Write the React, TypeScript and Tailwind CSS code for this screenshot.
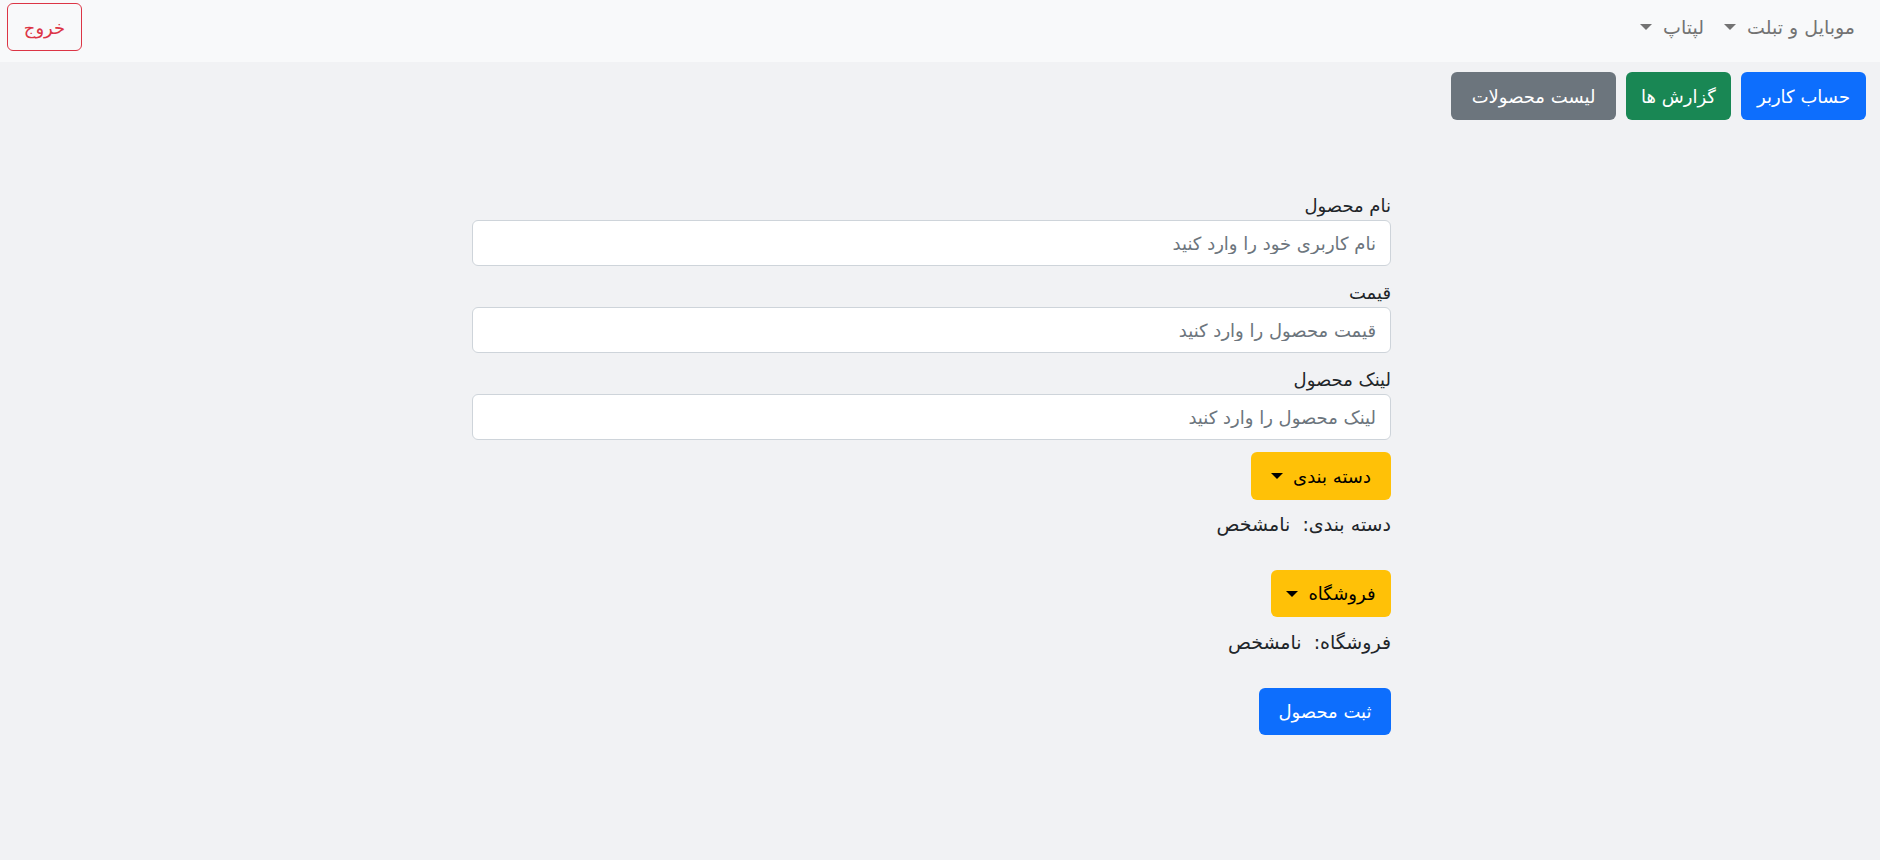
import { useState } from "react";

type Field = {
  id: string;
  label: string;
  placeholder: string;
};

const fields: Field[] = [
  { id: "name", label: "نام محصول", placeholder: "نام کاربری خود را وارد کنید" },
  { id: "price", label: "قیمت", placeholder: "قیمت محصول را وارد کنید" },
  { id: "link", label: "لینک محصول", placeholder: "لینک محصول را وارد کنید" },
];

function Caret({ className = "border-t-[#737373]" }: { className?: string }) {
  return <span className={`inline-block h-0 w-0 border-x-[6px] border-t-[6px] border-x-transparent ${className}`} />;
}

function NavItem({ label }: { label: string }) {
  return (
    <button className="flex items-center gap-[11px] px-[10px] text-[19px] text-[#737373]" type="button">
      <span>{label}</span>
      <Caret />
    </button>
  );
}

export default function App() {
  const [values, setValues] = useState<Record<string, string>>({});

  return (
    <div
      className="min-h-[860px] bg-[#f1f2f4] text-[#212529]"
      dir="rtl"
      style={{ fontFamily: '"DejaVu Sans", "Noto Sans", sans-serif' }}
    >
      <nav className="flex h-[62px] items-start justify-between bg-[#f8f9fa] pl-[7px] pr-[15px]">
        <div className="flex h-[54px] items-center">
          <NavItem label="موبایل و تبلت" />
          <NavItem label="لپتاپ" />
        </div>
        <button
          className="mt-[3px] flex h-[48px] w-[75px] items-center justify-center rounded-[6px] border border-[#dc3545] text-[18px] text-[#dc3545]"
          type="button"
        >
          خروج
        </button>
      </nav>

      <div className="flex gap-[10px] pr-[14px] pt-[10px]">
        <button className="flex h-[48px] w-[125px] items-center justify-center rounded-[6px] bg-[#0d6efd] text-[18px] text-white" type="button">
          حساب کاربر
        </button>
        <button className="flex h-[48px] w-[105px] items-center justify-center rounded-[6px] bg-[#198754] text-[18px] text-white" type="button">
          گزارش ها
        </button>
        <button className="flex h-[48px] w-[165px] items-center justify-center rounded-[6px] bg-[#6c757d] text-[18px] text-white" type="button">
          لیست محصولات
        </button>
      </div>

      <form className="mr-[489px] w-[919px] pt-[71px]" onSubmit={(e) => e.preventDefault()}>
        {fields.map((field, index) => (
          <div className={index === 0 ? "" : "mt-[12px]"} key={field.id}>
            <label className="block h-[29px] text-[18px] leading-[29px]" htmlFor={field.id}>
              {field.label}
            </label>
            <input
              className="block h-[46px] w-full rounded-[6px] border border-[#ced4da] bg-white px-[14px] text-[18px] outline-none placeholder:text-[#6c757d]"
              id={field.id}
              onChange={(e) => setValues((v) => ({ ...v, [field.id]: e.target.value }))}
              placeholder={field.placeholder}
              value={values[field.id] ?? ""}
            />
          </div>
        ))}

        <button
          className="mt-[12px] flex h-[48px] w-[140px] items-center justify-center gap-[10px] rounded-[6px] bg-[#ffc107] text-[18px] text-black"
          type="button"
        >
          <span>دسته بندی</span>
          <Caret className="border-t-black" />
        </button>
        <p className="mt-[10px] h-[29px] text-[19px] leading-[29px]">دسته بندی:&nbsp; نامشخص</p>

        <button
          className="mt-[31px] flex h-[47px] w-[120px] items-center justify-center gap-[10px] rounded-[6px] bg-[#ffc107] text-[18px] text-black"
          type="button"
        >
          <span>فروشگاه</span>
          <Caret className="border-t-black" />
        </button>
        <p className="mt-[11px] h-[29px] text-[19px] leading-[29px]">فروشگاه:&nbsp; نامشخص</p>

        <button
          className="mt-[31px] flex h-[47px] w-[132px] items-center justify-center rounded-[6px] bg-[#0d6efd] text-[18px] text-white"
          type="submit"
        >
          ثبت محصول
        </button>
      </form>
    </div>
  );
}
